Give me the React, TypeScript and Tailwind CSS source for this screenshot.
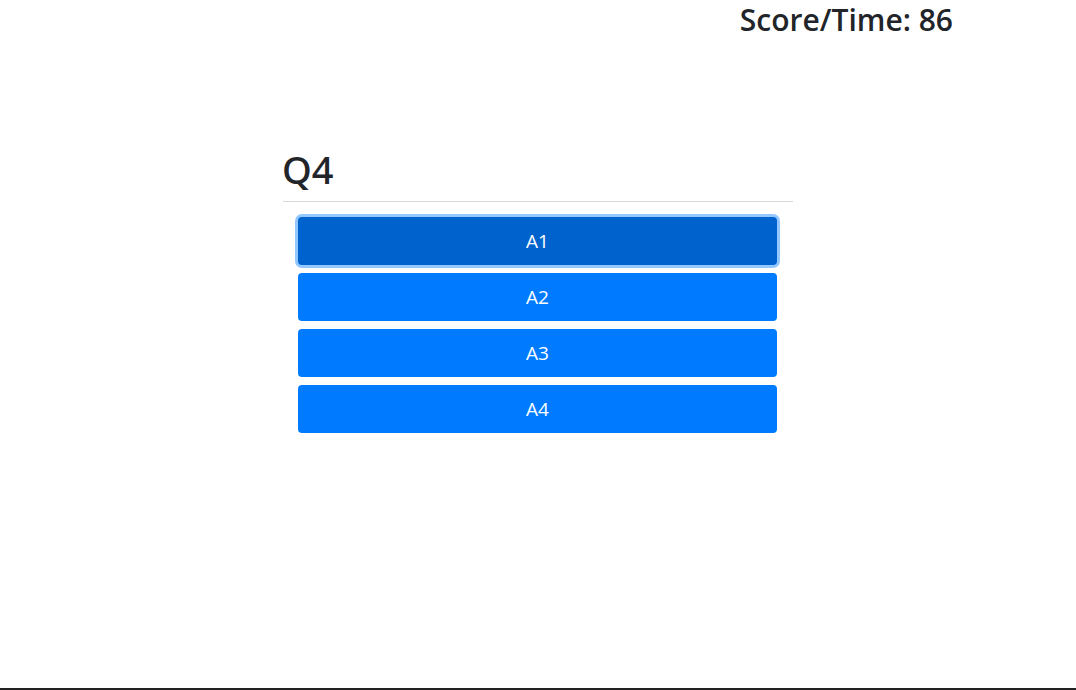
import { useState } from 'react'

const answers = ['A1', 'A2', 'A3', 'A4']

export default function App() {
  const [selected, setSelected] = useState('A1')

  return (
    <div
      className="h-[690px] border-b-2 border-[#222] bg-white text-[#212529] overflow-hidden"
      style={{ fontFamily: '"Open Sans", "Noto Sans", sans-serif' }}
    >
      {/* Score header */}
      <div className="flex justify-end pr-[123px] h-[35px] pt-[2px]">
        <h3 className="text-[30px] leading-[1.2] font-semibold">Score/Time: 86</h3>
      </div>

      {/* Question card */}
      <div className="w-[510px] ml-[283px] mt-[112px]">
        <h1 className="text-[38px] leading-[1.2] font-medium -ml-[1px] mb-[8px] [font-family:'Noto_Sans',sans-serif]">
          Q4
        </h1>
        <hr className="border-0 border-t border-[#d8d8d8] mb-[15px]" />
        <div className="flex flex-col gap-2 px-[15px]">
          {answers.map((a) => (
            <button
              key={a}
              onClick={() => setSelected(a)}
              className={`w-[479px] h-12 pt-[2px] rounded text-white text-[19px] leading-none ${
                selected === a
                  ? 'bg-[#0062cc] shadow-[0_0_0_3px_rgba(38,143,255,0.5)]'
                  : 'bg-[#007bff]'
              }`}
            >
              {a}
            </button>
          ))}
        </div>
      </div>
    </div>
  )
}
